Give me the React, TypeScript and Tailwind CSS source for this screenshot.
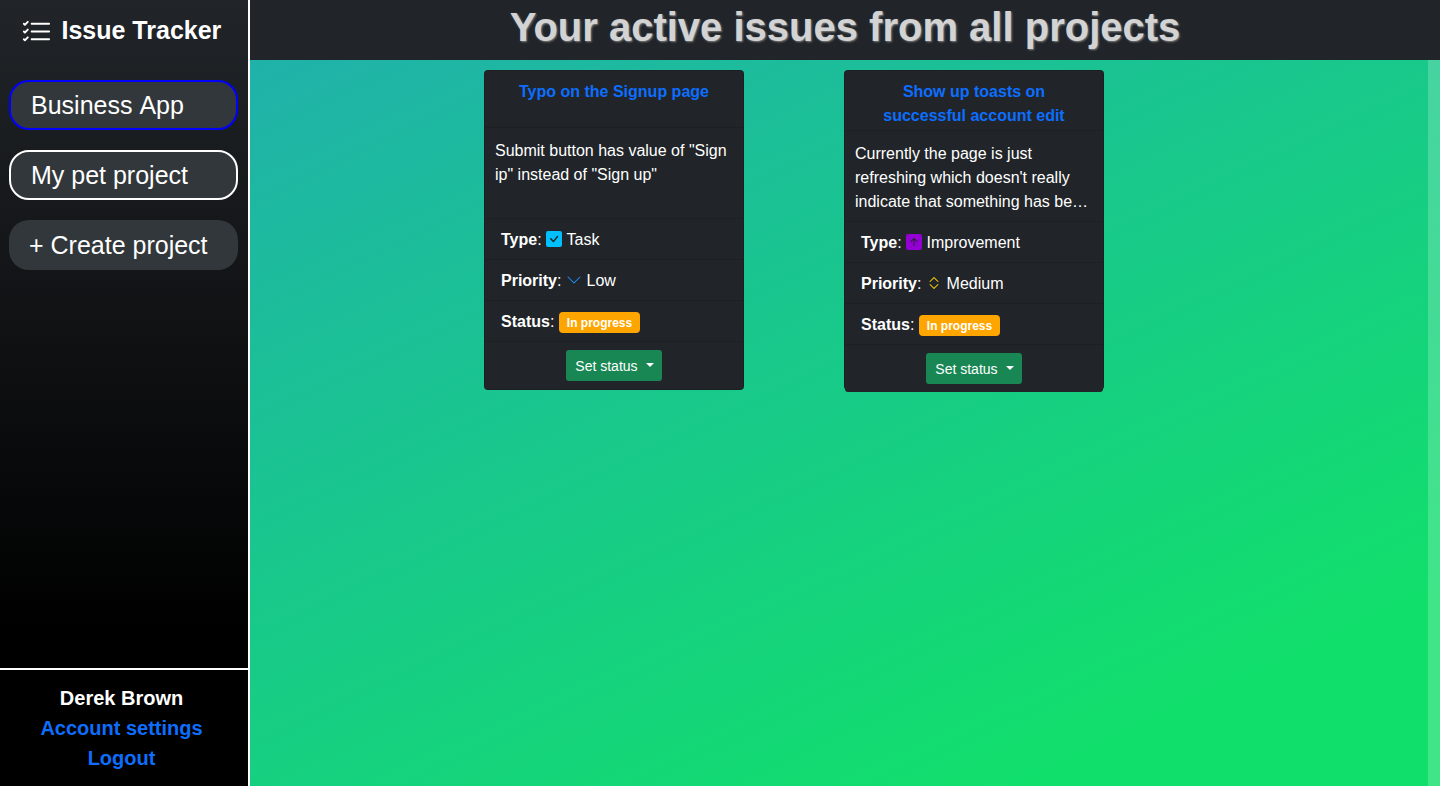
import React from "react";
import { BsListCheck, BsCheckSquareFill, BsChevronDown, BsChevronExpand, BsArrowUpSquareFill } from "react-icons/bs";

type Issue = {
  title: string;
  body: string;
  type: string;
  typeIcon: React.ReactNode;
  priority: string;
  priorityIcon: React.ReactNode;
  tall: boolean;
};

const issues: Issue[] = [
  {
    title: "Typo on the Signup page",
    body: 'Submit button has value of "Sign ip" instead of "Sign up"',
    type: "Task",
    typeIcon: <BsCheckSquareFill className="mr-[0.4px] inline-block size-4 align-[-2px] text-[#00bfff]" />,
    priority: "Low",
    priorityIcon: <BsChevronDown className="mr-[0.2px] inline-block size-4 align-[-2px] text-[#1e90ff]" />,
    tall: false,
  },
  {
    title: "Show up toasts on successful account edit",
    body: "Currently the page is just refreshing which doesn't really indicate that something has be…",
    type: "Improvement",
    typeIcon: <BsArrowUpSquareFill className="inline-block size-4 align-[-2px] text-[#9400d3]" />,
    priority: "Medium",
    priorityIcon: <BsChevronExpand className="mr-[0.2px] inline-block size-4 align-[-2px] text-[#ffd700]" />,
    tall: true,
  },
];

function Row({ label, children }: { label: string; children: React.ReactNode }) {
  return (
    <li className="h-[41px] border-b border-black/[0.125] px-4 pt-[9px] leading-6">
      <b>{label}</b>: {children}
    </li>
  );
}

function IssueCard({ issue }: { issue: Issue }) {
  return (
    <article className="flex h-[320px] w-[260px] flex-col rounded border border-black/[0.125] bg-[#212529] text-base text-white">
      <h5
        className={`shrink-0 border-b border-black/[0.125] px-4 pt-[9px] text-center font-bold leading-6 text-[#0d6efd] ${issue.tall ? "h-[60px]" : "h-[57px]"}`}
      >
        {issue.title}
      </h5>
      <div className="h-[91px] shrink-0 border-b border-black/[0.125] px-2.5 pt-[11px]">
        <p className="leading-6">{issue.body}</p>
      </div>
      <ul className="shrink-0">
        <Row label="Type">
          {issue.typeIcon} {issue.type}
        </Row>
        <Row label="Priority">
          {issue.priorityIcon} {issue.priority}
        </Row>
        <Row label="Status">
          <span className="inline-block rounded bg-[#ffa500] px-2 pb-1 pt-[5px] align-baseline text-xs font-bold leading-3">In progress</span>
        </Row>
      </ul>
      <div className="flex h-[47px] shrink-0 items-start justify-center rounded-b-[3px] bg-[#212529] pt-2">
        <button className="flex h-[31px] w-24 items-center rounded-[3px] bg-[#198754] pl-[9.3px] text-sm">
          Set status
          <span className="mb-0.5 ml-2 border-x-4 border-t-4 border-x-transparent border-t-white" />
        </button>
      </div>
    </article>
  );
}

export default function App() {
  return (
    <div className="flex h-[786px] w-full overflow-hidden font-['Liberation_Sans',sans-serif]">
      <aside className="flex w-[250px] shrink-0 flex-col border-r-2 border-white bg-[linear-gradient(#212529,#000_80%)] text-white">
        <div className="flex h-[60px] items-center gap-[9.5px] pl-[21px] pt-0.5">
          <BsListCheck className="mt-0.5 size-[31px]" />
          <span className="text-[25px] font-bold">Issue Tracker</span>
        </div>
        <nav className="mt-5 flex flex-col gap-5 pl-[9px] pr-2.5 text-[25px] [font-kerning:none]">
          <a className="flex h-[50px] items-center rounded-[20px] border-2 border-[#0000ff] bg-[#32373b] pl-5 pt-0.5">Business App</a>
          <a className="flex h-[50px] items-center rounded-[20px] border-2 border-white bg-[#32373b] pl-5 pt-0.5">My pet project</a>
          <a className="flex h-[50px] items-center rounded-[20px] bg-[#32373b] pl-5 pt-0.5">+ Create project</a>
        </nav>
        <div className="mt-auto flex h-[118px] flex-col items-center border-t-2 border-white bg-black pr-[5px] pt-[13px] text-xl font-bold leading-[30px]">
          <span>Derek Brown</span>
          <a className="text-[#0d6efd]">Account settings</a>
          <a className="text-[#0d6efd]">Logout</a>
        </div>
      </aside>
      <main className="flex min-w-0 flex-1 flex-col">
        <header className="h-[60px] bg-[#212529] pt-[3px] text-center text-[40px] font-bold leading-[48px] text-[#d3d3d3] [text-shadow:1px_1px_2px_gray]">
          Your active issues from all projects
        </header>
        <section className="flex flex-1 bg-[linear-gradient(155deg,#20b2aa,#11df6b_85%)]">
          <div className="flex flex-1 items-start justify-center gap-[100px] pr-[90px] pt-2.5">
            {issues.map((issue) => (
              <IssueCard key={issue.title} issue={issue} />
            ))}
          </div>
          <div className="w-3 bg-white/20" />
        </section>
      </main>
    </div>
  );
}
